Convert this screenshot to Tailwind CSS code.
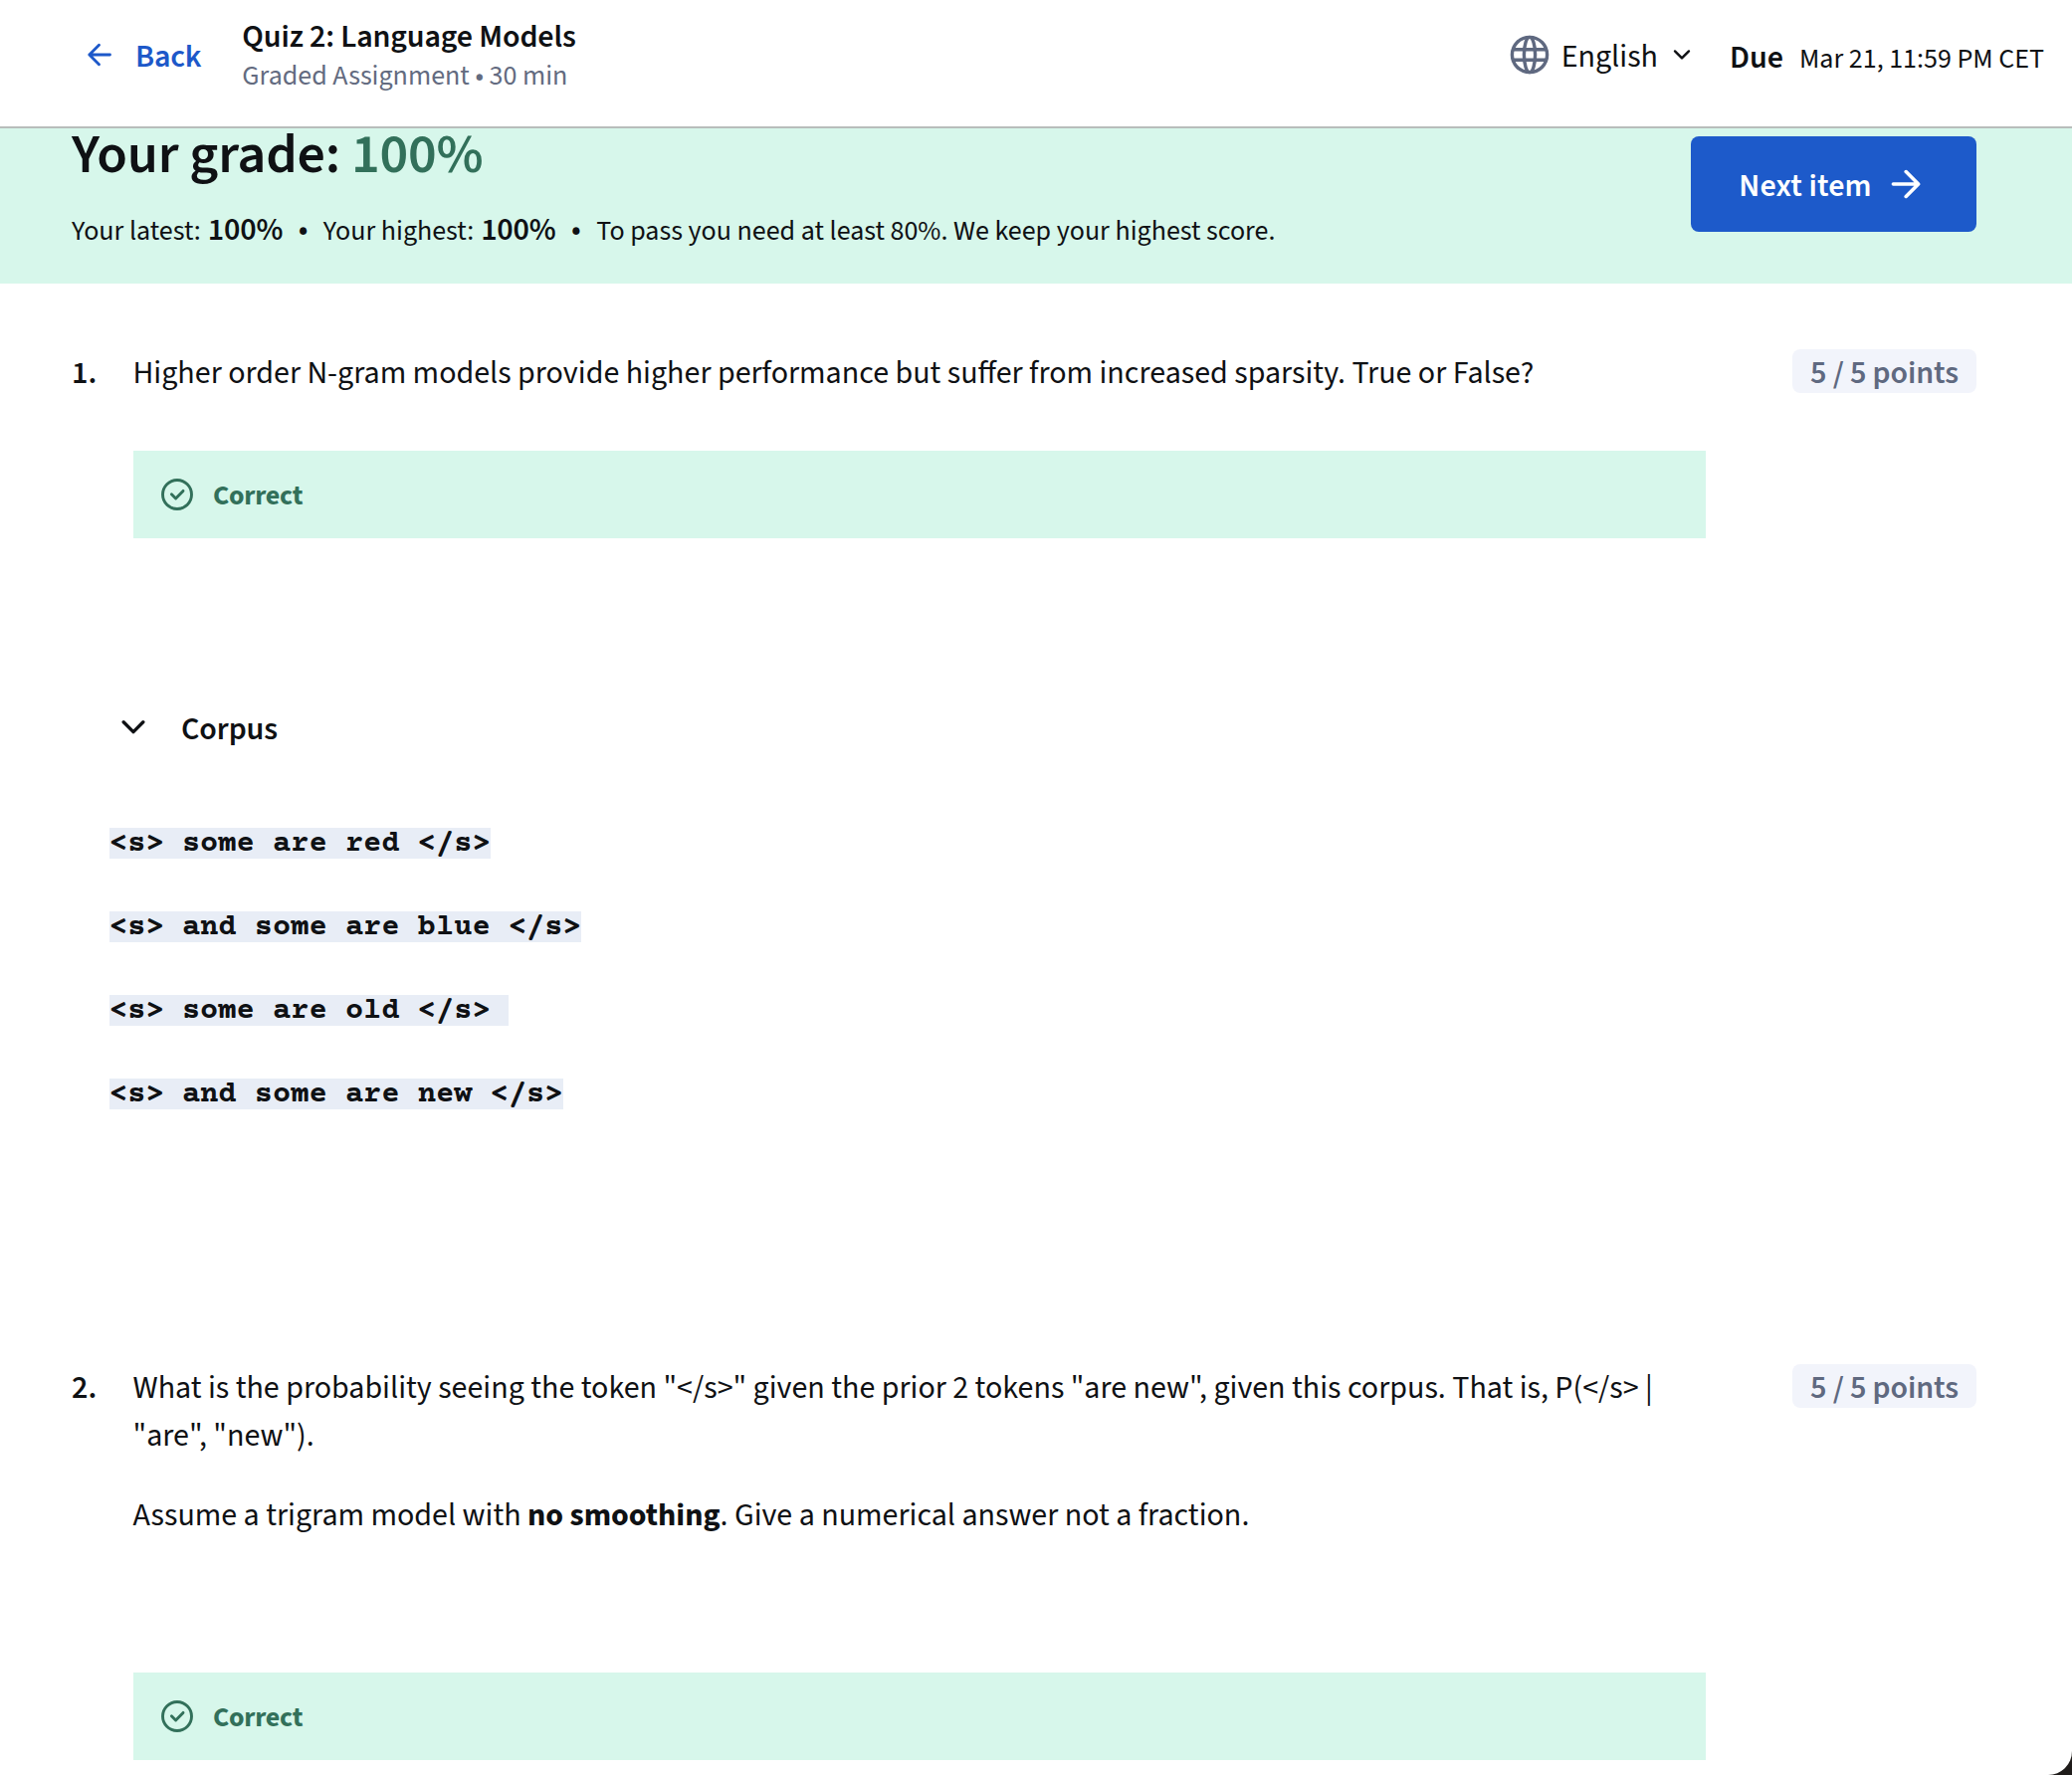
<!DOCTYPE html>
<html lang="en">
<head>
<meta charset="utf-8">
<title>Quiz 2: Language Models</title>
<script src="https://cdn.jsdelivr.net/npm/@tailwindcss/browser@4"></script>
</head>
<body class="bg-[#1f1c1a]">
<div class="relative flex h-[1784px] w-[2082px] flex-col overflow-hidden rounded-br-[24px] bg-white font-['Source_Sans_3','Noto_Sans_CJK_SC',sans-serif] text-[32px] leading-[40px] text-[#0f1114]">

  <header class="flex h-[129px] shrink-0 items-start justify-between border-b-2 border-[#b8bdbb] pr-[28px] pl-[88px]">
    <div class="flex items-start">
      <a class="flex pt-[37px] text-[#1d58c9]">
        <svg class="mt-[6px] h-6 w-6" viewBox="0 0 24 24" fill="none" stroke="currentColor" stroke-width="2.8" stroke-linecap="round" stroke-linejoin="round"><path d="M22.5 12H1.8M11.5 2.2 1.8 12l9.7 9.8"/></svg>
        <span class="ml-[24px] font-semibold tracking-[-0.2px]">Back</span>
      </a>
      <div class="ml-[41px] pt-[17px]">
        <div class="font-semibold tracking-[-0.13px]">Quiz 2: Language Models</div>
        <div class="text-[28px] leading-[38px] text-[#636b80]">Graded Assignment • 30 min</div>
      </div>
    </div>
    <div class="flex items-start">
      <svg class="mt-[35px] h-10 w-10 text-[#5f6980]" viewBox="0 0 40 40" fill="none" stroke="currentColor" stroke-width="3.4"><circle cx="20" cy="20" r="17.6"/><ellipse cx="20" cy="20" rx="5.6" ry="17.6"/><path d="M3 14.8h34M3 25.2h34"/></svg>
      <span class="ml-[12px] pt-[37px]">English</span>
      <svg class="mt-[49px] ml-[15px] h-3 w-[18px]" viewBox="0 0 18 12" fill="none" stroke="currentColor" stroke-width="2.4" stroke-linecap="round" stroke-linejoin="round"><path d="m2 2.4 7 7 7-7"/></svg>
      <div class="ml-[39px] flex items-baseline pt-[38px]"><span class="font-semibold">Due</span><span class="ml-[16px] text-[28px]">Mar 21, 11:59 PM CET</span></div>
    </div>
  </header>

  <section class="flex h-[156px] shrink-0 items-start justify-between bg-[#d7f7eb] pr-[96px] pl-[72px]">
    <div>
      <h1 class="text-[56px] leading-[54px] font-semibold tracking-[-0.2px]">Your grade: <span class="text-[#32705a]">100%</span></h1>
      <div class="mt-[28px] flex items-baseline text-[28px]">
        <span>Your latest:</span><span class="ml-[7px] text-[32px] font-semibold tracking-[-0.2px]">100%</span>
        <span class="mx-[15.5px] text-[32px]">•</span>
        <span>Your highest:</span><span class="ml-[7px] text-[32px] font-semibold tracking-[-0.2px]">100%</span>
        <span class="mx-[15.5px] text-[32px]">•</span>
        <span>To pass you need at least 80%. We keep your highest score.</span>
      </div>
    </div>
    <button class="mt-[8px] flex h-24 w-[287px] items-center justify-center gap-[19px] rounded-lg bg-[#1d5aca] pr-2 text-white">
      <span class="pt-[3px] font-semibold tracking-[0.15px]">Next item</span>
      <svg class="h-[30px] w-[30px]" viewBox="0 0 30 30" fill="none" stroke="currentColor" stroke-width="3.6" stroke-linecap="round" stroke-linejoin="round"><path d="M2.4 15h25M15.2 2.6 27.6 15 15.2 27.4"/></svg>
    </button>
  </section>

  <section class="flex shrink-0 items-start pt-[66px] pr-[96px] pl-[72px] leading-[48px]">
    <div class="w-[61.5px] font-semibold">1.</div>
    <div class="w-[1580.5px]">
      <p>Higher order N-gram models provide higher performance but suffer from increased sparsity. True or False?</p>
      <div class="mt-[54px] ml-[0.5px] flex h-[88px] items-center bg-[#d7f7eb] pl-[28px] text-[#32705a]">
        <svg class="h-8 w-8" viewBox="0 0 32 32" fill="none" stroke="currentColor" stroke-width="2.9" stroke-linecap="round" stroke-linejoin="round"><circle cx="16" cy="16" r="14.5"/><path d="m10.4 15.8 4.2 4.2 7.4-7.6"/></svg>
        <span class="ml-[20px] pt-[2px] text-[28px] font-bold tracking-[-0.25px]">Correct</span>
      </div>
    </div>
    <div class="ml-auto flex h-11 w-[185px] items-center justify-center rounded-lg bg-[#f2f4fb] pt-[3px] font-semibold tracking-[-0.1px] text-[#5f6980]">5 / 5 points</div>
  </section>

  <section class="mt-[170px] shrink-0 pl-[110px]">
    <div class="flex items-center pl-[12px]">
      <svg class="mb-[2px] h-4 w-6" viewBox="0 0 24 16" fill="none" stroke="currentColor" stroke-width="3.4" stroke-linecap="round" stroke-linejoin="round"><path d="m2.2 2.8 9.8 9.8 9.8-9.8"/></svg>
      <h2 class="mt-[2px] ml-[36px] font-semibold tracking-[-0.1px]">Corpus</h2>
    </div>
    <div class="mt-[79px] flex flex-col items-start gap-[53px] font-['Courier_Prime','Courier_New','Liberation_Mono',monospace] text-[30.4px] leading-[33px] font-bold whitespace-pre">
      <code class="h-[31px] bg-[#e8edf6] font-[inherit]">&lt;s&gt; some are red &lt;/s&gt;</code>
      <code class="h-[31px] bg-[#e8edf6] font-[inherit]">&lt;s&gt; and some are blue &lt;/s&gt;</code>
      <code class="h-[31px] bg-[#e8edf6] font-[inherit]">&lt;s&gt; some are old &lt;/s&gt; </code>
      <code class="h-[31px] bg-[#e8edf6] font-[inherit]">&lt;s&gt; and some are new &lt;/s&gt;</code>
    </div>
  </section>

  <section class="mt-[256px] flex shrink-0 items-start pr-[96px] pl-[72px] leading-[48px]">
    <div class="w-[61.5px] font-semibold">2.</div>
    <div class="w-[1580.5px]">
      <p>What is the probability seeing the token "&lt;/s&gt;" given the prior 2 tokens "are new", given this corpus. That is, P(&lt;/s&gt; |<br>"are", "new").</p>
      <p class="mt-[32px]">Assume a trigram model with <b class="font-bold">no smoothing</b>. Give a numerical answer not a fraction.</p>
      <div class="mt-[134px] ml-[0.5px] flex h-[88px] items-center bg-[#d7f7eb] pl-[28px] text-[#32705a]">
        <svg class="h-8 w-8" viewBox="0 0 32 32" fill="none" stroke="currentColor" stroke-width="2.9" stroke-linecap="round" stroke-linejoin="round"><circle cx="16" cy="16" r="14.5"/><path d="m10.4 15.8 4.2 4.2 7.4-7.6"/></svg>
        <span class="ml-[20px] pt-[2px] text-[28px] font-bold tracking-[-0.25px]">Correct</span>
      </div>
    </div>
    <div class="ml-auto flex h-11 w-[185px] items-center justify-center rounded-lg bg-[#f2f4fb] pt-[3px] font-semibold tracking-[-0.1px] text-[#5f6980]">5 / 5 points</div>
  </section>
</div>
</body>
</html>
